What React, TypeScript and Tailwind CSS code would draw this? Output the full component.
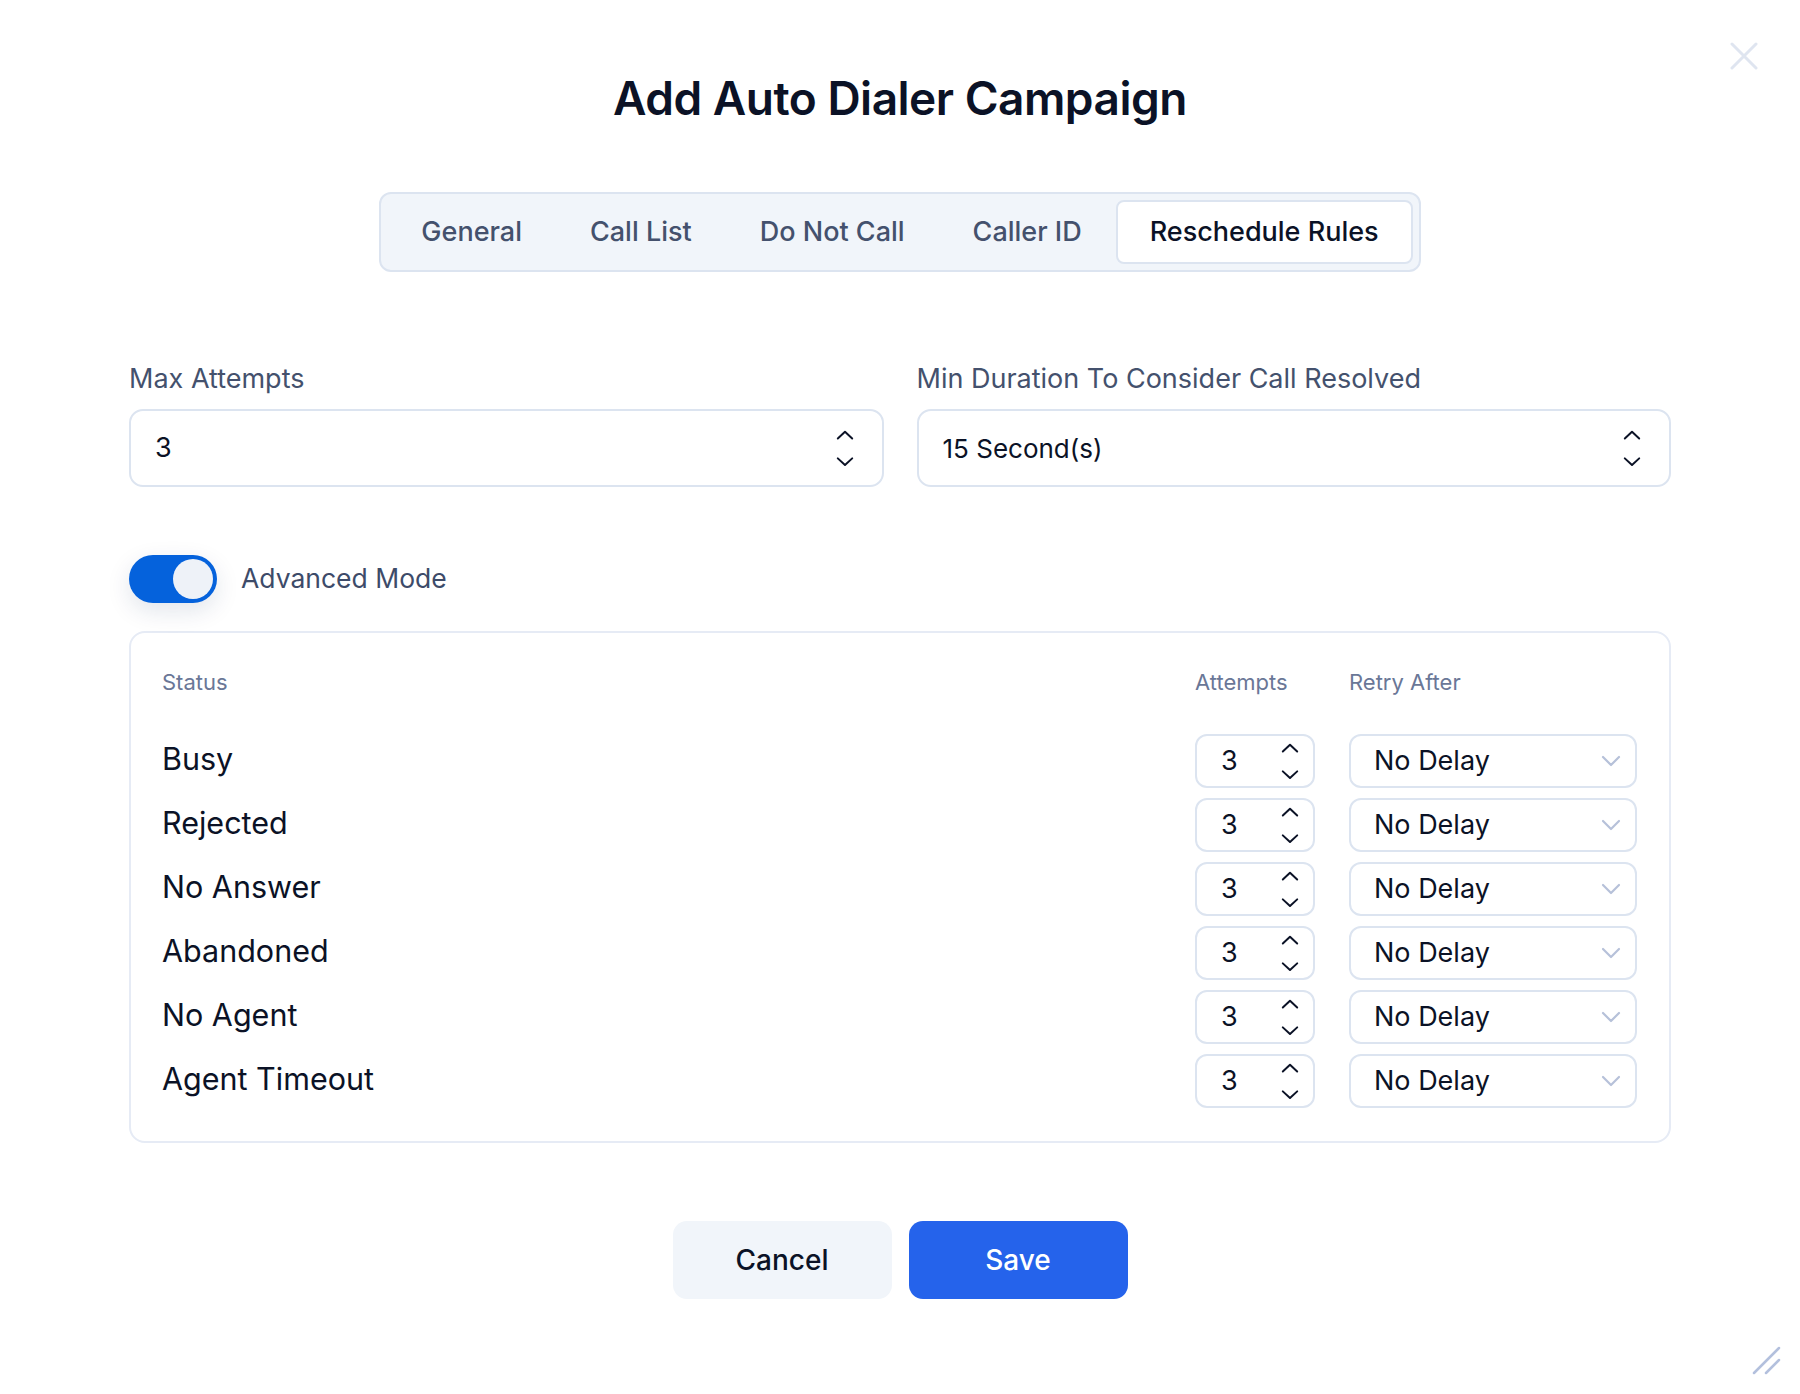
import React from "react";

const rows = ["Busy", "Rejected", "No Answer", "Abandoned", "No Agent", "Agent Timeout"];

function Chevron({ up, w = 18 }: { up?: boolean; w?: number }) {
  return (
    <svg width={w} height={w * 0.55} viewBox="0 0 20 11" fill="none">
      <path
        d={up ? "M2 9.5 L10 2 L18 9.5" : "M2 1.5 L10 9 L18 1.5"}
        stroke="currentColor"
        strokeWidth="2.2"
        strokeLinecap="round"
        strokeLinejoin="round"
      />
    </svg>
  );
}

export default function App() {
  const tabs = ["General", "Call List", "Do Not Call", "Caller ID", "Reschedule Rules"];
  return (
    <div
      className="relative w-[1800px] h-[1394px] bg-white overflow-hidden"
      style={{ fontFamily: "Inter, 'Noto Sans', sans-serif" }}
    >
      {/* close */}
      <button className="absolute left-[1730px] top-[42px] w-[28px] h-[28px] text-[#dfe5f0]">
        <svg width="28" height="28" viewBox="0 0 28 28" fill="none">
          <path d="M2 2 L26 26 M26 2 L2 26" stroke="currentColor" strokeWidth="3" strokeLinecap="round" />
        </svg>
      </button>

      {/* resize handle */}
      <div className="absolute left-[1752px] top-[1345px] text-[#b3c0dd]">
        <svg width="30" height="30" viewBox="0 0 30 30" fill="none">
          <path d="M2 28 L27 3 M14 28 L27 15" stroke="currentColor" strokeWidth="2.5" strokeLinecap="round" />
        </svg>
      </div>

      <div className="flex flex-col items-center pt-[66px]">
        <h1 className="text-[46px] leading-[64px] font-semibold tracking-[-0.5px] text-[#0b1226]">
          Add Auto Dialer Campaign
        </h1>

        <div className="mt-[62px] flex items-center rounded-[12px] border-2 border-[#dce4f0] bg-[#f1f5fa] p-[6px]">
          {tabs.map((t, i) => (
            <div
              key={t}
              className={
                i === tabs.length - 1
                  ? "h-[64px] px-[32px] flex items-center rounded-[8px] bg-white border-2 border-[#dce4f0] text-[#0b1226] text-[27px] font-medium"
                  : "h-[64px] px-[34px] flex items-center text-[#44516d] text-[27px] font-medium"
              }
            >
              {t}
            </div>
          ))}
        </div>
      </div>

      <div className="mx-[129px] mt-[91px]">
        <div className="grid grid-cols-2 gap-[33px]">
          <div>
            <div className="text-[27px] leading-[32px] text-[#44516d]">Max Attempts</div>
            <div className="mt-[14px] h-[78px] rounded-[14px] border-2 border-[#dce4f0] flex items-center justify-between pl-[24px] pr-[28px]">
              <span className="text-[27px] text-[#0b1226]">3</span>
              <div className="flex flex-col items-center gap-[17px] text-[#0b1226]">
                <Chevron up />
                <Chevron />
              </div>
            </div>
          </div>
          <div>
            <div className="text-[27px] leading-[32px] text-[#44516d]">Min Duration To Consider Call Resolved</div>
            <div className="mt-[14px] h-[78px] rounded-[14px] border-2 border-[#dce4f0] flex items-center justify-between pl-[24px] pr-[28px]">
              <span className="text-[26px] text-[#0b1226]">15 Second(s)</span>
              <div className="flex flex-col items-center gap-[17px] text-[#0b1226]">
                <Chevron up />
                <Chevron />
              </div>
            </div>
          </div>
        </div>

        <div className="mt-[68px] flex items-center gap-[24px]">
          <div className="relative w-[88px] h-[48px] rounded-full bg-[#0562dc] shadow-[0_8px_24px_rgba(15,40,90,0.12)]">
            <div className="absolute right-[4px] top-[4px] w-[40px] h-[40px] rounded-full bg-[#eef2f8]" />
          </div>
          <span className="text-[26.5px] text-[#3d4b69]">Advanced Mode</span>
        </div>

        <div className="mt-[28px] rounded-[16px] border-2 border-[#e6ebf5] pl-[31px] pr-[32px] pt-[34px] pb-[33px]">
          <div className="flex items-center text-[22px] text-[#6a7797] h-[30px]">
            <div className="flex-1">Status</div>
            <div className="w-[154px]">Attempts</div>
            <div className="w-[288px]">Retry After</div>
          </div>
          <div className="mt-[37px] flex flex-col gap-[10px]">
            {rows.map((r) => (
              <div key={r} className="flex items-center h-[54px]">
                <div className="flex-1 text-[30.5px] text-[#0b1226] -mt-[4px]">{r}</div>
                <div className="w-[154px]">
                  <div className="w-[120px] h-[54px] rounded-[12px] border-2 border-[#dce4f0] flex items-center justify-between pl-[24px] pr-[14px]">
                    <span className="text-[27px] text-[#0b1226]">3</span>
                    <div className="flex flex-col items-center gap-[17px] text-[#0b1226]">
                      <Chevron up w={18} />
                      <Chevron w={18} />
                    </div>
                  </div>
                </div>
                <div className="w-[288px] h-[54px] rounded-[12px] border-2 border-[#dce4f0] flex items-center justify-between pl-[23px] pr-[14px]">
                  <span className="text-[27px] text-[#0b1226]">No Delay</span>
                  <svg width="20" height="12" viewBox="0 0 20 12" fill="none" className="text-[#b6c1d9]">
                    <path d="M2 2 L10 10 L18 2" stroke="currentColor" strokeWidth="2.2" strokeLinecap="round" strokeLinejoin="round" />
                  </svg>
                </div>
              </div>
            ))}
          </div>
        </div>

        <div className="mt-[78px] flex justify-center gap-[17px]">
          <button className="w-[219px] h-[78px] rounded-[14px] bg-[#f1f5fa] text-[28px] font-medium text-[#0b1226]">
            Cancel
          </button>
          <button className="w-[219px] h-[78px] rounded-[14px] bg-[#2563eb] text-[28px] font-medium text-white">
            Save
          </button>
        </div>
      </div>
    </div>
  );
}
